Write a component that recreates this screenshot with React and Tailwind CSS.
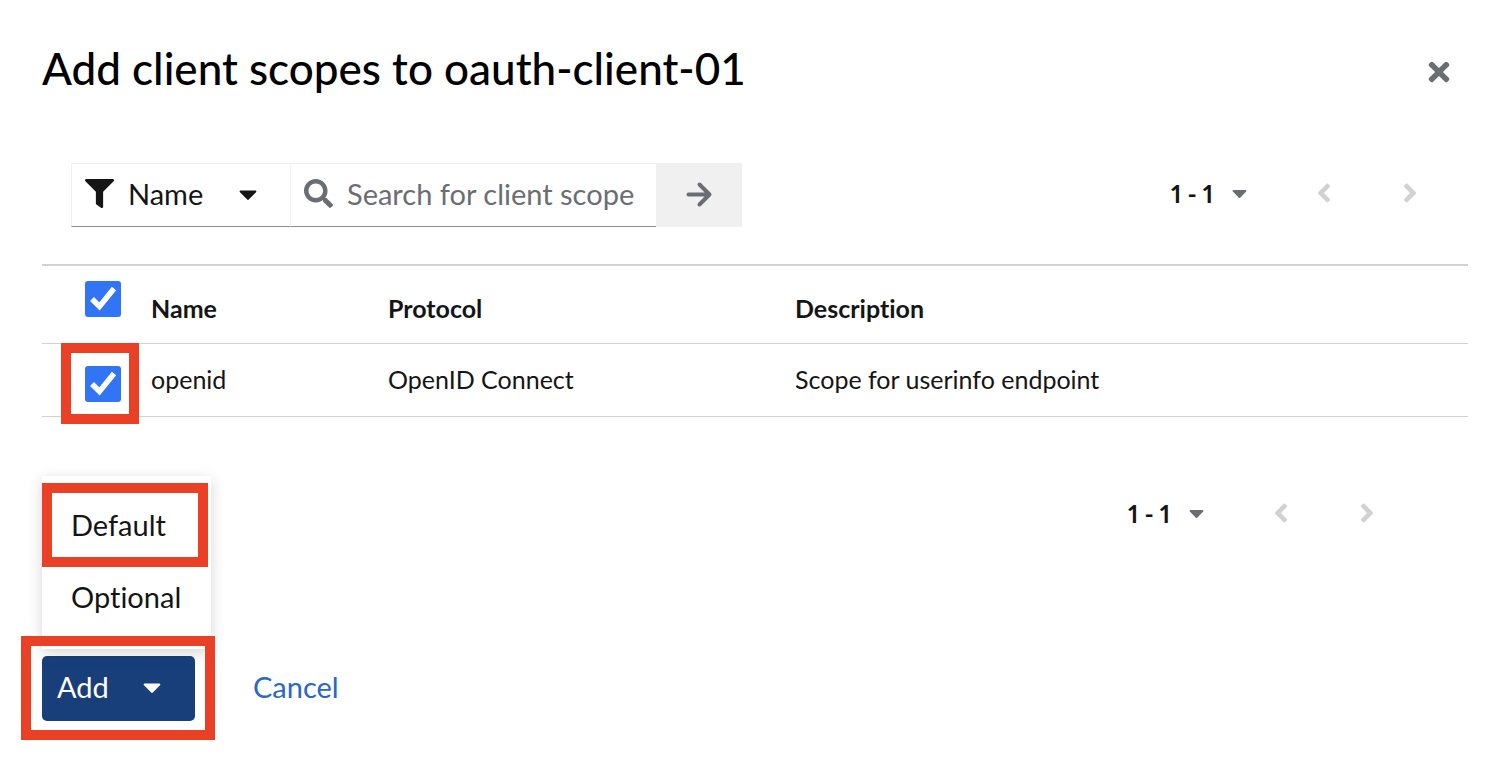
import { useState } from "react";
import { FaAngleLeft, FaAngleRight, FaCaretDown, FaFilter, FaSearch, FaTimes } from "react-icons/fa";

function ArrowRight() {
  return (
    <svg width="28" height="28" viewBox="0 0 28 28" fill="none" stroke="currentColor" strokeWidth="4" strokeLinecap="round" strokeLinejoin="round" aria-hidden="true">
      <path d="M3.500 14.500H24M14.500 4.500L24.500 14.500L14.500 24.500" />
    </svg>
  );
}

function Checkbox({ label }) {
  const [checked, setChecked] = useState(true);
  return (
    <label className="relative block size-9">
      <input
        type="checkbox"
        aria-label={label}
        checked={checked}
        onChange={(e) => setChecked(e.target.checked)}
        className="block size-9 appearance-none rounded-[3px] border border-gray-400 bg-white checked:border-0 checked:bg-[#3274f6]"
      />
      {checked && (
        <svg className="pointer-events-none absolute inset-0" width="36" height="36" viewBox="0 0 36 36" fill="none" stroke="#fff" strokeWidth="5.500" aria-hidden="true">
          <path d="M7 18L14.500 25.500L29 7.500" />
        </svg>
      )}
    </label>
  );
}

function Pagination() {
  return (
    <nav aria-label="Pagination" className="flex items-center text-[#151515]">
      <button type="button" className="flex w-[76px] items-center justify-between text-[25px] leading-8 font-bold proportional-nums">
        <span>1 - 1</span>
        <FaCaretDown className="h-6 w-[15px] text-[#6a6e73]" />
      </button>
      <button type="button" disabled aria-label="Previous" className="ml-[63px] flex w-[28px] justify-center text-[#d2d2d2]">
        <FaAngleLeft size={30} />
      </button>
      <button type="button" disabled aria-label="Next" className="ml-[58px] flex w-[28px] justify-center text-[#d2d2d2]">
        <FaAngleRight size={30} />
      </button>
    </nav>
  );
}

function Highlight({ className }) {
  return <span aria-hidden="true" className={`pointer-events-none absolute border-10 border-[#ea4025] ${className}`} />;
}

export default function App() {
  return (
    <main className="bg-white pt-[38px] pr-10 pb-10 pl-[42px] font-['Lato',sans-serif] text-[#151515] [font-variant-ligatures:no-common-ligatures]">
      <header className="flex items-center justify-between pr-[16px]">
        <h1 className="text-[44px] leading-[60px] font-medium text-black">Add client scopes to oauth-client-01</h1>
        <button type="button" aria-label="Close" className="flex w-[26px] justify-center pt-[7px] text-[#6a6e73]">
          <FaTimes size={30} />
        </button>
      </header>

      <div className="mt-[65px] flex items-center justify-between pr-[44px] pl-[29px]">
        <form className="flex h-16 text-[29px]" onSubmit={(e) => e.preventDefault()}>
          <button type="button" className="flex w-[220px] items-center border border-[#f0f0f0] border-b-[#8a8d90] pb-[3px] pl-[13px]">
            <FaFilter size={29} />
            <span className="w-[125px] pl-[14px] text-left">Name</span>
            <FaCaretDown className="h-8 w-[18px]" />
          </button>
          <label className="flex w-[365px] items-center border-t border-b border-t-[#f0f0f0] border-b-[#8a8d90] pb-[3px] pl-[13px]">
            <FaSearch size={29} className="shrink-0 text-[#6a6e73]" />
            <input type="text" aria-label="Search for client scope" placeholder="Search for client scope" className="ml-[14px] min-w-0 flex-1 bg-transparent outline-none placeholder:text-[#6a6e73]" />
          </label>
          <button type="submit" aria-label="Search" className="flex w-[86px] items-center justify-center bg-[#f0f0f0] pb-[3px] text-[#6a6e73]">
            <ArrowRight />
          </button>
        </form>
        <div className="pb-[4px]">
          <Pagination />
        </div>
      </div>

      <table className="mt-[37px] w-full table-fixed border-collapse text-left text-[25px] leading-8">
        <colgroup>
          <col className="w-[109px]" />
          <col className="w-[237px]" />
          <col className="w-[407px]" />
          <col />
        </colgroup>
        <thead>
          <tr className="h-[78px] border-t-2 border-b border-[#d2d2d2] align-top">
            <td className="pt-[15px] pl-[43px]"><Checkbox label="Select all" /></td>
            <th className="pt-[26px] font-bold">Name</th>
            <th className="pt-[26px] font-bold">Protocol</th>
            <th className="pt-[26px] font-bold">Description</th>
          </tr>
        </thead>
        <tbody>
          <tr className="h-[73px] border-b border-[#d2d2d2] align-top">
            <td className="relative pt-[22px] pl-[43px]">
              <Checkbox label="Select openid" />
              <Highlight className="-top-px left-[19px] h-[81px] w-[78px]" />
            </td>
            <td className="pt-[19px]">openid</td>
            <td className="pt-[19px]">OpenID Connect</td>
            <td className="pt-[19px]">Scope for userinfo endpoint</td>
          </tr>
        </tbody>
      </table>

      <div className="mt-[80px] flex justify-end pr-[87px]">
        <Pagination />
      </div>

      <footer className="mt-[127px] flex items-center text-[29px]">
        <div className="relative">
          <ul className="absolute bottom-[72px] left-0 w-[169px] bg-white pt-[14px] pb-[15px] shadow-[0_4px_14px_rgba(3,3,3,0.16)]">
            <li className="relative">
              <button type="button" className="block h-[72px] w-full px-[29px] pb-[2px] text-left">Default</button>
              <Highlight className="-top-[7px] left-0 h-[84px] w-[166px]" />
            </li>
            <li>
              <button type="button" className="block h-[72px] w-full px-[29px] pb-[2px] text-left">Optional</button>
            </li>
          </ul>
          <button type="button" aria-expanded="true" className="flex h-[65px] w-[153px] items-center rounded-[5px] bg-[#193f7b] pb-[2px] pl-[15px] text-white">
            <span className="w-[86px] text-left">Add</span>
            <FaCaretDown className="h-8 w-[18px]" />
          </button>
          <Highlight className="-top-[20px] -left-[21px] h-[104px] w-[194px]" />
        </div>
        <button type="button" className="ml-[58px] pb-[2px] text-[#2b66c8]">Cancel</button>
      </footer>
    </main>
  );
}
